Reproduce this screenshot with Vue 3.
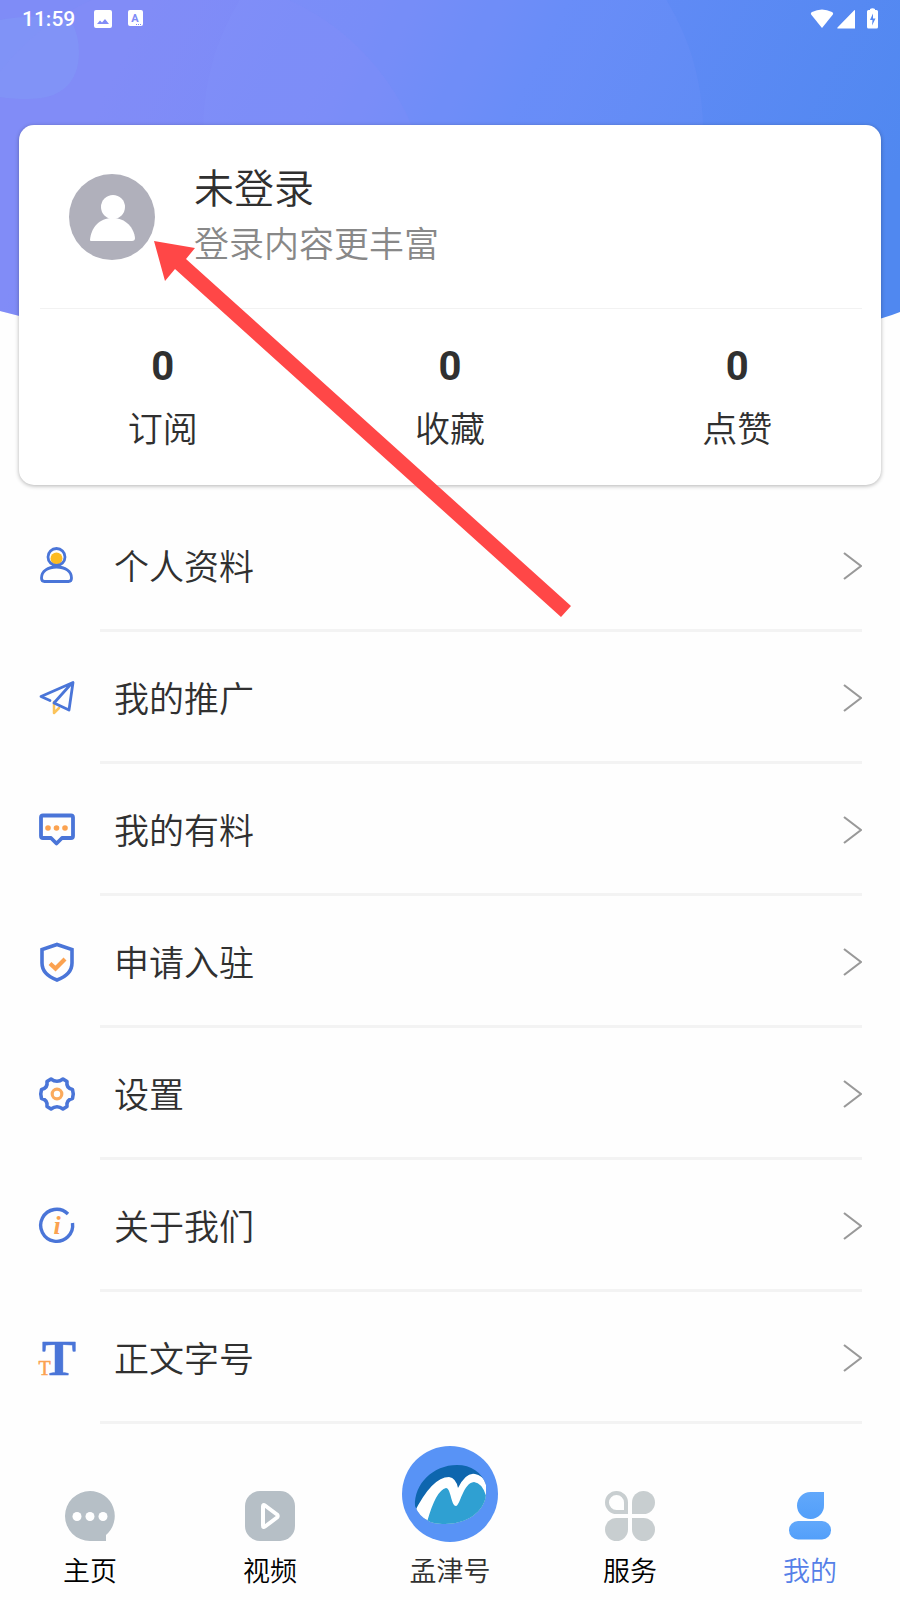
<script setup>
const stats = [
  { label: '订阅', value: 0 },
  { label: '收藏', value: 0 },
  { label: '点赞', value: 0 },
]

const menu = [
  { id: 'profile', label: '个人资料' },
  { id: 'promote', label: '我的推广' },
  { id: 'posts', label: '我的有料' },
  { id: 'apply', label: '申请入驻' },
  { id: 'settings', label: '设置' },
  { id: 'about', label: '关于我们' },
  { id: 'font', label: '正文字号' },
]
</script>

<template>
  <div class="page">
    <svg class="backdrop" viewBox="0 0 900 330" preserveAspectRatio="none" aria-hidden="true">
      <defs>
        <linearGradient id="sky" gradientUnits="userSpaceOnUse" x1="150" y1="0" x2="820" y2="330">
          <stop offset="0" stop-color="#7f8cf7" />
          <stop offset="0.28" stop-color="#768bf8" />
          <stop offset="0.5" stop-color="#658bf7" />
          <stop offset="1" stop-color="#5088f0" />
        </linearGradient>
        <clipPath id="hill"><path d="M0 0H900V312Q870 324 820 330H80Q40 322 0 311Z" /></clipPath>
      </defs>
      <g clip-path="url(#hill)">
        <rect width="900" height="330" fill="url(#sky)" />
        <circle cx="190" cy="220" r="241" fill="#8c8cf8" fill-opacity="0.2" />
        <circle cx="453" cy="130" r="250" fill="#8c9cff" fill-opacity="0.12" />
        <path d="M0 20Q40 12 72 22Q79 36 79 52C79 82 62 99 28 99Q12 99 0 97Z" fill="#83a8f8" fill-opacity="0.25" />
      </g>
    </svg>

    <header class="status">
      <time>11:59</time>
      <svg class="st-image" width="18" height="18" viewBox="0 0 18 18" aria-hidden="true">
        <path fill="#fff" fill-rule="evenodd" d="M2 0H16Q18 0 18 2V16Q18 18 16 18H2Q0 18 0 16V2Q0 0 2 0ZM3 14H15L11 9L8 12.500L6 10.500Z" />
      </svg>
      <svg class="st-a" width="16" height="17" viewBox="0 0 16 17" aria-hidden="true">
        <rect width="15" height="16" rx="2" fill="#fff" />
        <text x="7" y="12" text-anchor="middle" font-family="Roboto, sans-serif" font-weight="700" font-size="11" fill="#7f8cf7">A</text>
        <path d="M8 14.500H14" stroke="#7f8cf7" stroke-dasharray="1 1" />
      </svg>
      <span class="spacer"></span>
      <svg width="68" height="22" viewBox="0 0 68 22" aria-hidden="true">
        <g fill="#fff">
          <path d="M12 20L1.500 7Q0 5 2 4Q12-1 22 4Q24 5 22.500 7Z" />
          <path d="M44 2.500Q45 1.500 45 3V20.500H28Q26.500 20.500 27.500 19.500Z" />
          <path fill-rule="evenodd" d="M60 1Q62.500-.5 65 1V2H66.500Q68 2 68 3.500V19Q68 20.500 66.500 20.500H58.500Q57 20.500 57 19V3.500Q57 2 58.500 2H60ZM63 5.500L60 12H62.500L62 17.500L65.500 10.500H63Z" />
        </g>
      </svg>
    </header>

    <main>
      <section class="card">
        <button class="profile" type="button">
          <svg class="avatar" viewBox="0 0 86 86" aria-hidden="true">
            <circle cx="43" cy="43" r="43" fill="#b0b0bb" />
            <circle cx="44" cy="33" r="12" fill="#fff" />
            <path d="M21 66C22 54 30 44 43.500 44S65 54 66 64Q66 67 63 67H22Q21 67 21 66Z" fill="#fff" />
          </svg>
          <span class="who">
            <span class="name">未登录</span>
            <span class="hint">登录内容更丰富</span>
          </span>
        </button>
        <dl class="stats">
          <div v-for="s in stats" :key="s.label" class="stat">
            <dd>{{ s.value }}</dd>
            <dt>{{ s.label }}</dt>
          </div>
        </dl>
      </section>

      <ul class="menu">
        <li v-for="item in menu" :key="item.id">
          <button class="row" type="button">
            <svg class="icon" viewBox="0 0 40 40" fill="none" stroke="#4a75d8" stroke-width="2.800" stroke-linejoin="round" stroke-linecap="round" aria-hidden="true">
              <template v-if="item.id === 'profile'">
                <circle cx="20.500" cy="12.500" r="6" fill="#fdbb22" stroke="none" />
                <circle cx="20.500" cy="11" r="8.500" />
                <path d="M5.500 32C5.500 25 12 21 20.500 21S35.500 25 35.500 32Q35.500 35.500 32.500 35.500H8.500Q5.500 35.500 5.500 32Z" />
              </template>
              <template v-else-if="item.id === 'promote'">
                <path d="M18 24V35L23 30" stroke="#fbc35a" stroke-width="2.500" />
                <path d="M14 22.500L5 18.500L37 4.500L33 32L18 25L35 6" />
              </template>
              <template v-else-if="item.id === 'posts'">
                <path d="M7 5.500H35Q37 5.500 37 7.500V26Q37 28 35 28H26L20.500 33.500L15 28H7Q5 28 5 26V7.500Q5 5.500 7 5.500Z" stroke-width="3.800" />
                <g fill="#fba250" stroke="none">
                  <circle cx="12" cy="18" r="2.800" /><circle cx="20.500" cy="18" r="2.800" /><circle cx="29" cy="18" r="2.800" />
                </g>
              </template>
              <template v-else-if="item.id === 'apply'">
                <path d="M21 2.500L36 7.500V21C36 30 29 35 21 38C13 35 6 30 6 21V7.500Z" stroke-width="3.600" stroke-linejoin="miter" />
                <path d="M14 21.500L19.500 26.500L29 17" stroke="#fba250" stroke-width="4.200" stroke-linecap="butt" stroke-linejoin="miter" />
              </template>
              <template v-else-if="item.id === 'settings'">
                <path d="M15 5Q21 9.500 27 5L31 7.500Q30 14 36.500 15.500Q38 20 36.500 24.500Q30 26 31 32.500L27 35Q21 30.500 15 35L11 32.500Q12 26 5.500 24.500Q4 20 5.500 15.500Q12 14 11 7.500Z" stroke-width="3.600" />
                <circle cx="21" cy="20" r="4.800" stroke="#fbaa5c" stroke-width="3.200" />
              </template>
              <template v-else-if="item.id === 'about'">
                <path d="M32 8A16 16 0 1 0 36.500 17" stroke-width="3.400" stroke-linecap="butt" />
                <text x="21" y="28" text-anchor="middle" font-family="Liberation Serif, serif" font-style="italic" font-weight="700" font-size="26" fill="#fba250" stroke="none">i</text>
              </template>
              <template v-else>
                <text x="23" y="37" text-anchor="middle" font-family="Liberation Serif, serif" font-weight="700" font-size="51" fill="#4a75d8" stroke="#4a75d8" stroke-width="0.500">T</text>
                <text x="8.500" y="37" text-anchor="middle" font-family="Liberation Serif, serif" font-size="20" fill="#fba250" stroke="#fba250" stroke-width="0.500">T</text>
              </template>
            </svg>
            <span class="body">
              <span class="label">{{ item.label }}</span>
              <svg class="chevron" width="19" height="28" viewBox="0 0 19 28" aria-hidden="true">
                <path d="M1 1L18 14L1 27" fill="none" stroke="#999" stroke-width="2.200" />
              </svg>
            </span>
          </button>
        </li>
      </ul>
    </main>

    <nav class="tabs">
      <a href="#home">
        <svg viewBox="0 0 50 50" aria-hidden="true">
          <path d="M25 0A25 25 0 0 1 41 44V50H25A25 25 0 0 1 25 0Z" fill="#b6bfc6" />
          <g fill="#fff"><circle cx="12" cy="25.500" r="4.500" /><circle cx="25" cy="25.500" r="4.500" /><circle cx="38" cy="25.500" r="4.500" /></g>
        </svg>
        <span>主页</span>
      </a>
      <a href="#video">
        <svg viewBox="0 0 50 50" aria-hidden="true">
          <rect width="50" height="50" rx="15" fill="#b6bfc6" />
          <path d="M18 15.500V34.500Q18 37 20 35.500L32 26.500Q33.500 25 32 23.500L20 14.500Q18 13 18 15.500Z" fill="none" stroke="#fff" stroke-width="4" stroke-linejoin="round" />
        </svg>
        <span>视频</span>
      </a>
      <a href="#mengjin" class="center">
        <svg class="logo" viewBox="0 0 96 96" aria-hidden="true">
          <defs><clipPath id="disc"><path d="M13 60C12 38 31 19 55 19C69 19 80 26 84 39V49C82 66 65 78 43 78C35 78 29 77 25 74Q17 70 13 60Z" /></clipPath></defs>
          <circle cx="48" cy="48" r="48" fill="#5893f6" />
          <g clip-path="url(#disc)">
            <rect width="96" height="96" fill="#0e66ae" />
            <path d="M12 67Q30 31 47 31Q54 32 56 42Q64 26 73 28Q82 30 86 40V82H12Z" fill="#fff" />
            <path d="M25 76Q34 44 44 42C49 42 49 60 54 60C58 60 61 37 72 36Q81 37 85 53V82H23Z" fill="#2fa0d2" />
          </g>
        </svg>
        <span>孟津号</span>
      </a>
      <a href="#service">
        <svg viewBox="0 0 50 50" fill="#c8ced0" aria-hidden="true">
          <path d="M11.500 2A9.500 9.500 0 0 0 11.500 21H21V11.500A9.500 9.500 0 0 0 11.500 2Z" fill="none" stroke="#c8ced0" stroke-width="4" />
          <path d="M27 23V11.500A11.500 11.500 0 1 1 38.500 23Z" />
          <path d="M23 27V38.500A11.500 11.500 0 1 1 11.500 27Z" />
          <path d="M27 27H38.500A11.500 11.500 0 1 1 27 38.500Z" />
        </svg>
        <span>服务</span>
      </a>
      <a href="#mine" class="active" aria-current="page">
        <svg viewBox="0 0 50 50" aria-hidden="true">
          <defs><linearGradient id="mine-fill" x1="0" y1="0" x2="0" y2="1"><stop offset="0" stop-color="#62a8fb" /><stop offset="1" stop-color="#529ffa" /></linearGradient></defs>
          <path d="M39 1V14A13.500 13.500 0 1 1 25.500 1Z" fill="url(#mine-fill)" />
          <rect x="4" y="30" width="42" height="18.500" rx="9" fill="url(#mine-fill)" />
        </svg>
        <span>我的</span>
      </a>
    </nav>

    <svg class="pointer" width="420" height="380" viewBox="0 0 420 380" aria-hidden="true">
      <path d="M3 1L44 8L35 19L420 366L410 377L24 29L14 41Z" fill="#ff4747" />
    </svg>
  </div>
</template>

<style>
body {
  background: #fefefe;
}
</style>

<style scoped>
.page {
  position: relative;
  display: flex;
  flex-direction: column;
  min-height: 100vh;
  overflow: hidden;
  color: #303030;
  font-family: Roboto, "Noto Sans CJK SC DemiLight", "Noto Sans CJK SC", sans-serif;
  font-size: 35px;
  font-weight: 350;
  line-height: 48px;
}
button {
  border: 0;
  padding: 0;
  background: none;
  color: inherit;
  font: inherit;
  text-align: left;
  width: 100%;
  cursor: pointer;
}
svg {
  display: block;
  flex: none;
}
.backdrop {
  position: absolute;
  top: 0;
  left: 0;
  width: 100%;
  height: 330px;
}
.status {
  position: relative;
  display: flex;
  align-items: center;
  height: 37px;
  padding: 0 22px;
  color: #fff;
  font-size: 21px;
  font-weight: 500;
}
.status time {
  width: 72px;
}
.st-a {
  margin-left: 16px;
}
.spacer {
  flex: 1;
}
main {
  position: relative;
  padding: 88px 19px 0;
}
.card {
  background: #fff;
  border-radius: 15px;
  box-shadow: 0 1px 4px rgba(0, 0, 0, 0.3);
}
.profile {
  display: flex;
  align-items: center;
  gap: 39px;
  height: 183px;
  padding: 0 50px;
}
.avatar {
  width: 86px;
  height: 86px;
}
.who {
  display: grid;
  padding-top: 2px;
  line-height: 56px;
}
.name {
  font-size: 40px;
}
.hint {
  color: #888;
}
.stats {
  position: relative;
  display: grid;
  grid-template-columns: repeat(3, 1fr);
  margin: 0;
  padding: 35px 0 30px;
  text-align: center;
}
.stats::before {
  content: "";
  position: absolute;
  top: 0;
  left: 21px;
  right: 19px;
  height: 1px;
  background: #f2f2f2;
}
.stat {
  display: flex;
  flex-direction: column;
  gap: 16px;
}
.stat dd {
  margin: 0;
  font-size: 40px;
  font-weight: 700;
}
.menu {
  list-style: none;
  margin: 15px 0 0;
  padding: 0 19px 0 17px;
}
.row {
  display: flex;
  align-items: center;
  gap: 24px;
}
.icon {
  width: 40px;
  height: 40px;
  overflow: visible;
}
.body {
  flex: 1;
  display: flex;
  align-items: center;
  justify-content: space-between;
  height: 132px;
  padding-left: 14px;
  box-shadow: inset 0 -3px #f3f3f3;
}
.label {
  padding-top: 5px;
}
.tabs {
  position: relative;
  display: grid;
  grid-template-columns: repeat(5, 1fr);
  align-items: end;
  margin-top: auto;
  padding: 20px 0 10px;
  font-size: 27px;
  line-height: 36px;
}
.tabs a {
  display: flex;
  flex-direction: column;
  align-items: center;
  gap: 13px;
  color: #000;
  text-decoration: none;
}
.tabs svg {
  width: 50px;
  height: 50px;
}
.tabs .logo {
  width: 96px;
  height: 96px;
}
.tabs .center {
  gap: 12px;
  color: #303030;
}
.tabs .active {
  color: #5580e8;
}
.pointer {
  position: absolute;
  top: 240px;
  left: 151px;
  pointer-events: none;
}
</style>
